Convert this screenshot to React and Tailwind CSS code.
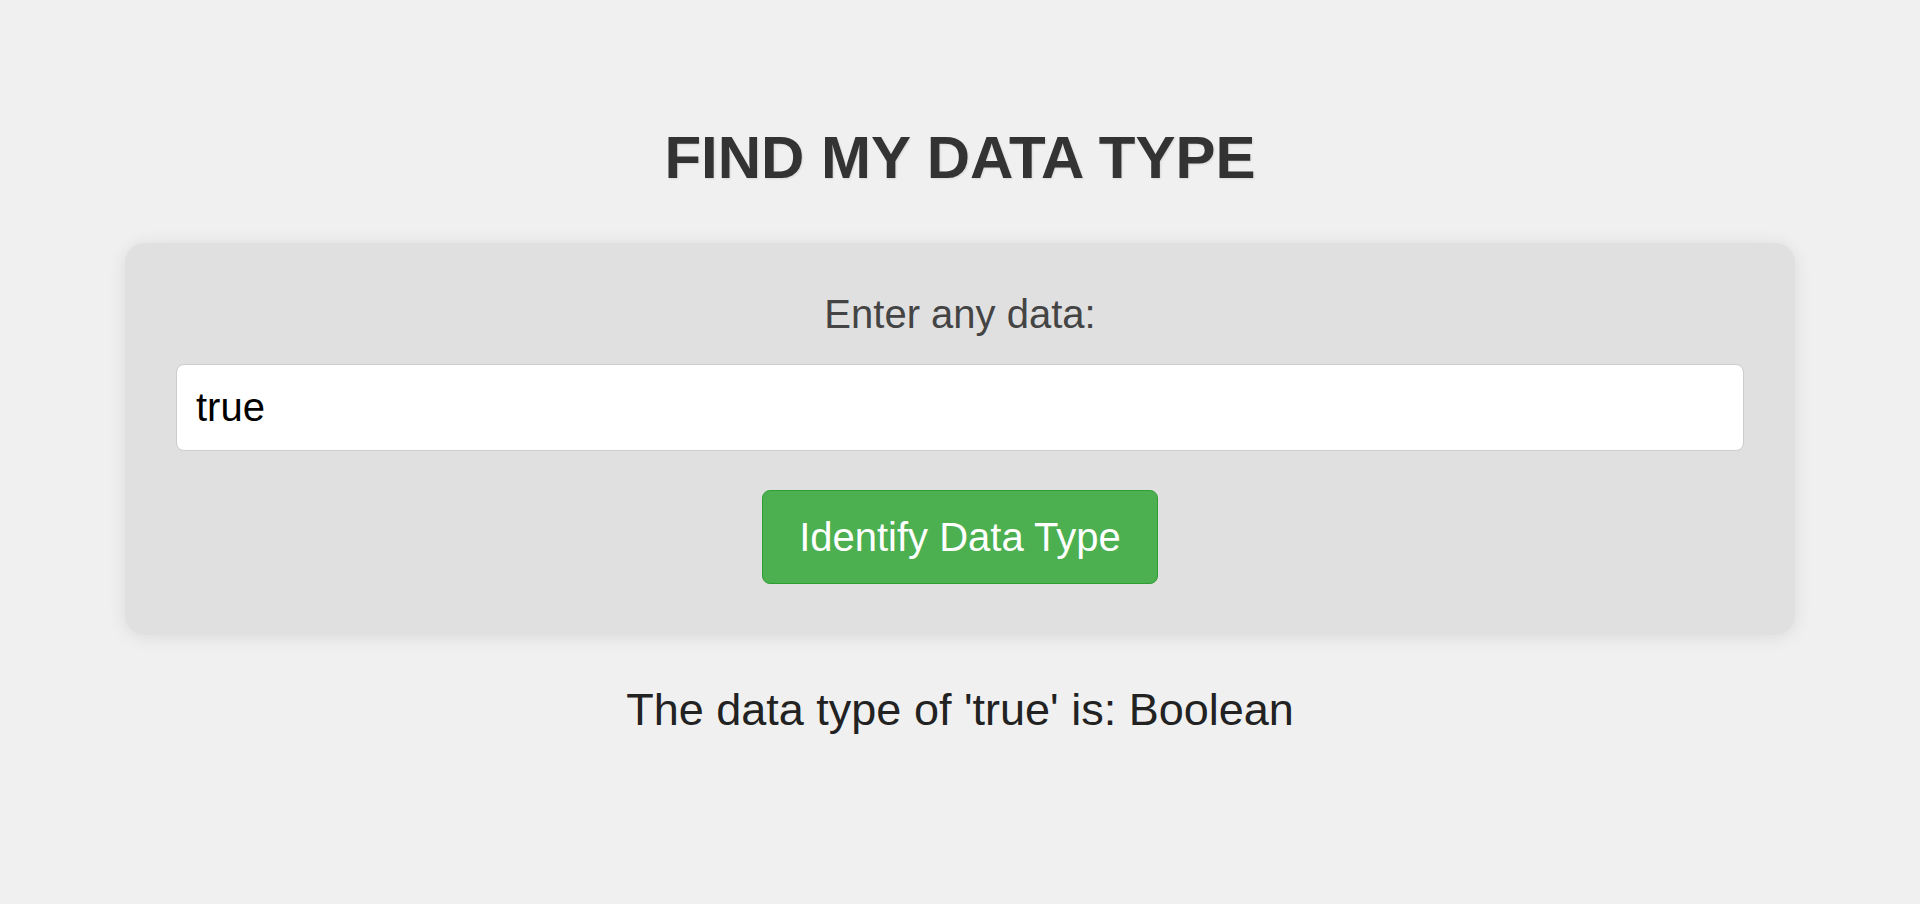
import React, { useState } from 'react';

const getType = (v) => {
    const s = v.trim();
    if (s === 'true' || s === 'false') return 'Boolean';
    if (s !== '' && !isNaN(Number(s))) return 'Number';
    return 'String';
};

const App = () => {
    const [value, setValue] = useState('true');
    const [result, setResult] = useState("The data type of 'true' is: Boolean");

    return (
        <div className="min-h-screen bg-[#f0f0f0] pt-[124px] font-['Liberation_Sans',Arial,sans-serif]">
            <h1 className="text-center text-[60px] leading-[68px] font-bold text-[#333] [text-shadow:1px_1px_2px_rgba(0,0,0,0.1)]">FIND MY DATA TYPE</h1>
            <div className="mx-auto mt-[51px] w-[1670px] rounded-[20px] bg-[#e0e0e0] px-[51px] pt-[49px] pb-[51px] shadow-[0_2px_18px_rgba(0,0,0,0.09)]">
                <label className="block text-center text-[40px] leading-[45px] text-[#444]">Enter any data:</label>
                <input
                    className="mt-[27px] block h-[87px] w-full rounded-[8px] border border-[#ccc] bg-white px-[19px] text-[40px] text-black outline-none"
                    value={value}
                    onChange={(e) => setValue(e.target.value)}
                />
                <div className="mt-[39px] flex justify-center">
                    <button
                        className="h-[94px] w-[396px] rounded-[8px] border border-[#2e9e33] bg-[#4caf50] text-[40px] text-white"
                        onClick={() => setResult(`The data type of '${value}' is: ${getType(value)}`)}
                    >
                        Identify Data Type
                    </button>
                </div>
            </div>
            <p className="mt-[49px] text-center text-[45px] leading-[52px] text-[#222]">{result}</p>
        </div>
    );
};

export default App;
